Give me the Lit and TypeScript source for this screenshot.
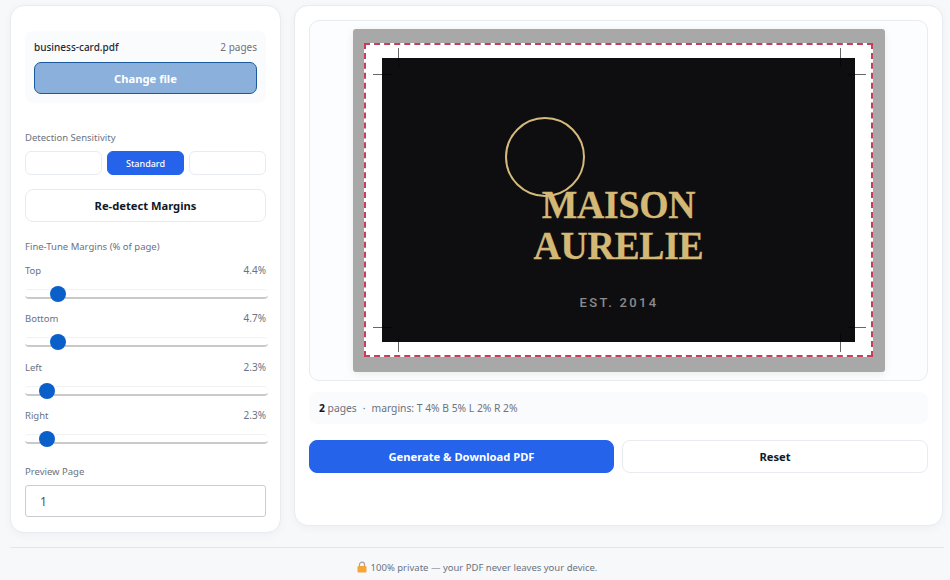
import { LitElement, html, css } from "lit";
import { customElement } from "lit/decorators.js";

// pos is where the thumb sits, value is the readout
const margins = [
  { name: "Top", value: 4.4, pos: 4.4 },
  { name: "Bottom", value: 4.7, pos: 4.4 },
  { name: "Left", value: 2.3, pos: 2.4 },
  { name: "Right", value: 2.3, pos: 2.4 },
];

// crop marks: [left, top, width, height] inside the white page area
const cropMarks = [
  [32, 3, 1, 19],
  [7, 29, 19, 1],
  [474, 3, 1, 19],
  [482, 29, 18, 1],
  [32, 291, 1, 16],
  [7, 282, 19, 1],
  [474, 288, 1, 19],
  [482, 282, 18, 1],
];

@customElement("app-root")
export class AppRoot extends LitElement {
  static styles = css`
    :host {
      display: block;
      width: 950px;
      height: 580px;
      overflow: hidden;
      background: #f6f8fa;
      font-family: "Noto Sans", "Open Sans", sans-serif;
      color: #111827;
    }
    * {
      box-sizing: border-box;
    }
    .layout {
      display: grid;
      grid-template-columns: 271px 649px;
      gap: 13px;
      align-items: start;
      padding: 5px 0 0 10px;
    }
    .card {
      background: #fff;
      border: 1px solid #e8ebef;
      border-radius: 14px;
      box-shadow: 0 2px 10px rgba(17, 24, 39, 0.04);
    }
    .sidebar {
      height: 528px;
      padding: 25px 14px 0;
    }
    .file-box {
      background: #fafbfc;
      border-radius: 8px;
      padding: 9px 9px 8px;
      height: 72px;
    }
    .file-row {
      display: flex;
      justify-content: space-between;
      align-items: center;
      height: 13px;
      margin-bottom: 9px;
      font-size: 10px;
    }
    .file-row span:first-child {
      font-weight: 500;
      color: #1f2937;
    }
    .file-row span:last-child {
      color: #6b7280;
    }
    .change {
      display: flex;
      align-items: center;
      justify-content: center;
      height: 32px;
      background: #8cb0dc;
      border: 1px solid #1d5a9c;
      border-radius: 7px;
      color: #fff;
      font-size: 11.2px;
      font-weight: 700;
    }
    .label {
      font-size: 9.5px;
      line-height: 13px;
      color: #6b7280;
    }
    .sensitivity {
      margin-top: 28px;
    }
    .seg {
      display: grid;
      grid-template-columns: repeat(3, 77px);
      gap: 5px;
      margin-top: 7px;
    }
    .seg div {
      display: flex;
      align-items: center;
      justify-content: center;
      height: 24px;
      background: #fff;
      border: 1px solid #e8ebef;
      border-radius: 6px;
      font-size: 9px;
      font-weight: 500;
    }
    .seg .on {
      background: #2563eb;
      border-color: #2563eb;
      color: #fff;
    }
    .btn {
      display: flex;
      align-items: center;
      justify-content: center;
      height: 33px;
      background: #fff;
      border: 1px solid #e8ebef;
      border-radius: 8px;
      font-size: 11.2px;
      font-weight: 700;
      color: #111827;
    }
    .redetect {
      width: 241px;
      margin-top: 14px;
    }
    .tune {
      margin-top: 18px;
      margin-bottom: 11px;
    }
    .slider {
      height: 48.3px;
    }
    .slider-head {
      display: flex;
      justify-content: space-between;
      width: 241px;
      font-size: 9.5px;
      line-height: 13px;
      color: #6b7280;
    }
    .slider-head span:last-child {
      font-size: 10px;
    }
    input[type="range"] {
      -webkit-appearance: none;
      appearance: none;
      display: block;
      width: 243px;
      height: 18px;
      margin: 8px 0 0;
      background: transparent;
    }
    input[type="range"]::-webkit-slider-runnable-track {
      height: 10px;
      background: #fff;
      border-radius: 4px;
      border-top: 1px solid #f1f2f4;
      border-bottom: 2px solid #c9c9c9;
    }
    input[type="range"]::-webkit-slider-thumb {
      -webkit-appearance: none;
      width: 16px;
      height: 16px;
      margin-top: -4px;
      border-radius: 50%;
      background: #0a60c8;
    }
    .preview-label {
      margin-top: 8px;
    }
    .page-input {
      display: flex;
      align-items: center;
      width: 241px;
      height: 32px;
      margin-top: 7px;
      padding-left: 14px;
      border: 1px solid #c9ccd1;
      border-radius: 3px;
      font-size: 12px;
      color: #4b5563;
    }
    .main {
      height: 521px;
      padding: 14px 14px 0;
    }
    .stage {
      display: flex;
      justify-content: center;
      height: 361px;
      padding-top: 8px;
      border: 1px solid #e8ebef;
      border-radius: 10px;
      background: #fcfdfe;
    }
    .sheet {
      width: 532px;
      height: 343px;
      padding: 14px 12px 15px 11px;
      background: #a8a8a8;
      border-radius: 3px;
      box-shadow: 0 2px 8px rgba(0, 0, 0, 0.08);
    }
    .trim {
      position: relative;
      width: 509px;
      height: 314px;
      background: #fff;
      border: 2px dashed #c33f5a;
    }
    .art {
      position: absolute;
      left: 16px;
      top: 13px;
      width: 473px;
      height: 284px;
      background: #0e0e10;
    }
    .mark {
      position: absolute;
      background: rgba(0, 0, 0, 0.6);
    }
    .ring {
      position: absolute;
      left: 123px;
      top: 59px;
      width: 80px;
      height: 80px;
      border: 2px solid #d4bb7b;
      border-radius: 50%;
    }
    .brand {
      position: absolute;
      left: 0;
      top: 126px;
      width: 473px;
      text-align: center;
      font-family: "Liberation Serif", serif;
      font-weight: 700;
      font-size: 41px;
      line-height: 41px;
      letter-spacing: -0.3px;
      color: #d4b876;
      -webkit-text-stroke: 0.3px #d4b876;
      transform: scaleX(0.92);
    }
    .est {
      position: absolute;
      left: 1px;
      top: 237px;
      width: 473px;
      text-align: center;
      font-family: Roboto, sans-serif;
      font-size: 13px;
      font-weight: 500;
      line-height: 16px;
      letter-spacing: 2.3px;
      color: #8b8b8b;
    }
    .stats {
      display: flex;
      align-items: center;
      gap: 6px;
      height: 32px;
      margin-top: 11px;
      padding-left: 10px;
      background: #fafbfc;
      border-radius: 8px;
      font-size: 10.3px;
      color: #6b7280;
    }
    .stats b {
      color: #111827;
      font-weight: 700;
    }
    .actions {
      display: grid;
      grid-template-columns: 305px 306px;
      gap: 8px;
      margin-top: 16px;
    }
    .primary {
      background: #2563eb;
      border-color: #2563eb;
      color: #fff;
    }
    footer {
      display: flex;
      align-items: center;
      justify-content: center;
      gap: 4px;
      width: 934px;
      height: 34px;
      margin: 14px 0 0 10px;
      border-top: 1px solid #e3e6ea;
      font-size: 9.5px;
      color: #6b7280;
      padding-top: 6px;
    }
    footer svg {
      display: block;
      margin-top: -2px;
    }
  `;

  render() {
    return html`
      <div class="layout">
        <aside class="card sidebar">
          <div class="file-box">
            <div class="file-row">
              <span>business-card.pdf</span><span>2 pages</span>
            </div>
            <div class="change">Change file</div>
          </div>
          <div class="label sensitivity">Detection Sensitivity</div>
          <div class="seg">
            <div></div>
            <div class="on">Standard</div>
            <div></div>
          </div>
          <div class="btn redetect">Re-detect Margins</div>
          <div class="label tune">Fine-Tune Margins (% of page)</div>
          ${margins.map(
            (m) => html`
              <div class="slider">
                <div class="slider-head">
                  <span>${m.name}</span><span>${m.value}%</span>
                </div>
                <input type="range" min="0" max="40" step="0.1" .value=${String(m.pos)} />
              </div>
            `
          )}
          <div class="label preview-label">Preview Page</div>
          <div class="page-input">1</div>
        </aside>

        <main class="card main">
          <div class="stage">
            <div class="sheet">
              <div class="trim">
                <div class="art">
                  <div class="ring"></div>
                  <div class="brand">MAISON<br />AURELIE</div>
                  <div class="est">EST. 2014</div>
                </div>
                ${cropMarks.map(
                  ([l, t, w, h]) => html`<div
                    class="mark"
                    style="left:${l}px;top:${t}px;width:${w}px;height:${h}px"
                  ></div>`
                )}
              </div>
            </div>
          </div>
          <div class="stats">
            <span><b>2</b> pages</span><span>·</span><span>margins: T 4% B 5% L 2% R 2%</span>
          </div>
          <div class="actions">
            <div class="btn primary">Generate &amp; Download PDF</div>
            <div class="btn">Reset</div>
          </div>
        </main>
      </div>
      <footer>
        <svg width="10" height="12" viewBox="0 0 10 12" aria-hidden="true">
          <path d="M2.5 5.5V3.6a2.5 2.5 0 0 1 5 0v1.9" fill="none" stroke="#a8a29a" stroke-width="1.2" />
          <rect x="0.5" y="5" width="9" height="6.5" rx="1" fill="#f4a638" />
        </svg>
        <span>100% private — your PDF never leaves your device.</span>
      </footer>
    `;
  }
}
